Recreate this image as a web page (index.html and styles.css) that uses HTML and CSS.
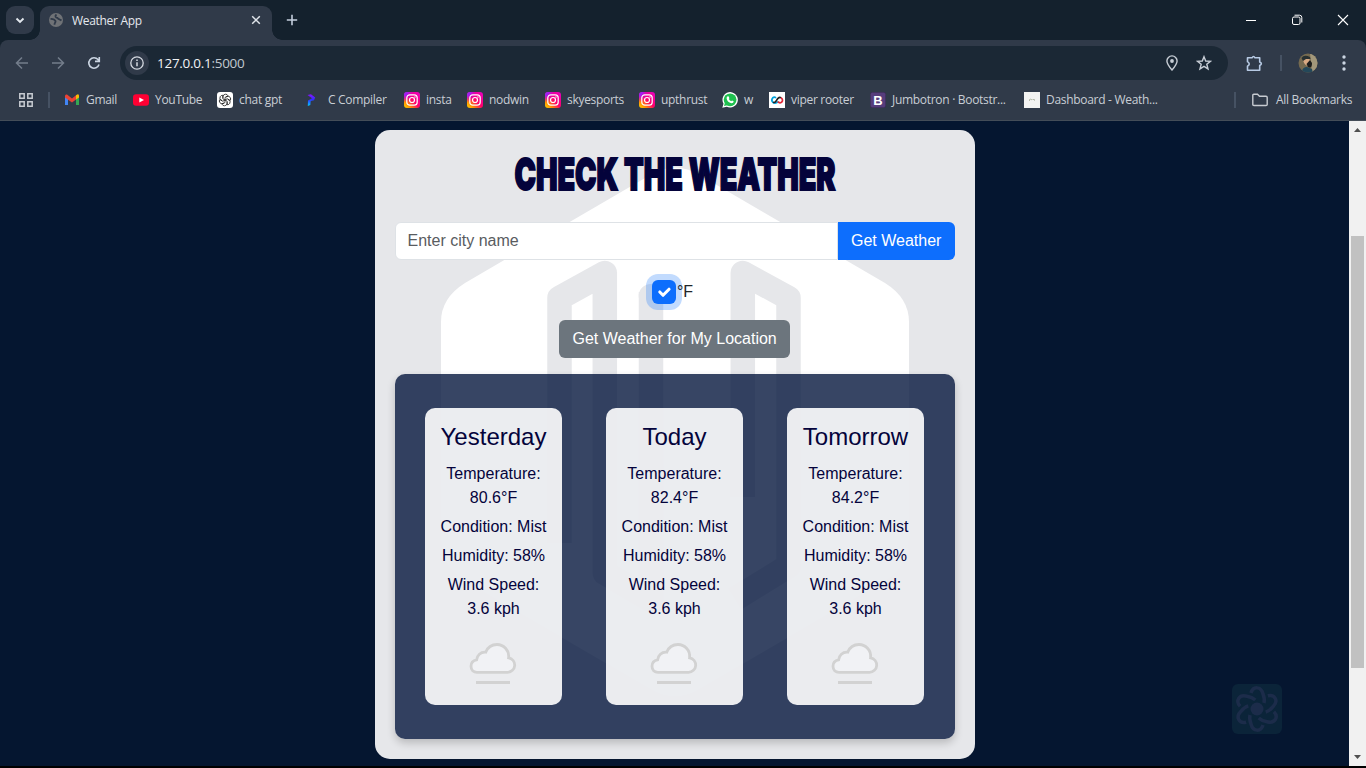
FILE: index.html
```html
<!DOCTYPE html>
<html lang="en">
<head>
<meta charset="utf-8">
<title>Weather App</title>
<link rel="stylesheet" href="styles.css">
</head>
<body>
<svg width="0" height="0" class="defs" aria-hidden="true">
  <defs>
    <linearGradient id="ig" x1="0" y1="1" x2="1" y2="0"><stop offset="0" stop-color="#ffd600"/><stop offset=".22" stop-color="#ff9100"/><stop offset=".5" stop-color="#ff0069"/><stop offset="1" stop-color="#e600c8"/></linearGradient>
    <radialGradient id="ig2" cx="0" cy="0" r=".65"><stop offset="0" stop-color="#7638fa"/><stop offset=".35" stop-color="#a818f0"/><stop offset="1" stop-color="#d300c5" stop-opacity="0"/></radialGradient>
    <linearGradient id="prog" x1="0" y1="1" x2="0" y2="0"><stop offset="0" stop-color="#00d0ff"/><stop offset=".55" stop-color="#3030ff"/><stop offset="1" stop-color="#8a10ff"/></linearGradient>
    <symbol id="insta" viewBox="0 0 16 16"><rect width="16" height="16" rx="3" fill="url(#ig)"/><rect width="16" height="16" rx="3" fill="url(#ig2)"/><rect x="2.8" y="2.8" width="10.4" height="10.4" rx="3" fill="none" stroke="#fff" stroke-width="1.2"/><circle cx="8" cy="8" r="2.5" fill="none" stroke="#fff" stroke-width="1.2"/><circle cx="11" cy="5" r=".7" fill="#fff"/></symbol>
    <symbol id="mist" viewBox="0 0 48 42"><path d="M8 30.3H38.500A7.300 7.300 0 0 0 39.600 15.800C40.500 8.500 35 2.600 28 2.500C22.500 2.500 18.600 5.600 16.700 10.200C11.500 9.800 8 13.500 7.600 17.900C3.500 18.600 2 21 2 24.300C2 28 4.500 30.300 8 30.300Z" fill="#f1f2f5" stroke="#d2d2d2" stroke-width="2.800"/><path d="M7 40.500H41" stroke="#d2d2d2" stroke-width="3"/></symbol>
  </defs>
</svg>
<div class="window">
  <header class="tabstrip">
    <div class="tab-search"><svg width="10" height="7" viewBox="0 0 10 7"><path d="M1.500 1.500 5 5 8.500 1.500" fill="none" stroke="#e3e8ee" stroke-width="1.900"/></svg></div>
    <div class="tab">
      <svg class="tab-icon" width="14" height="14" viewBox="0 0 14 14"><circle cx="7" cy="7" r="7" fill="#6f7276"/><path d="M1.500 5.800C3.500 6 5.500 6 6.500 8C7 9.500 5.500 9.500 5.500 11.800M7.500 1.500C5.500 3 6.500 5 8.500 5C9.500 6.500 11 6 12.500 7.500" fill="none" stroke="#303a49" stroke-width="1.800"/></svg>
      <span class="tab-title">Weather App</span>
      <svg width="10" height="10" viewBox="0 0 10 10"><path d="M1.200 1.200 8.800 8.800M8.800 1.200 1.200 8.800" stroke="#dfe4ea" stroke-width="1.500"/></svg>
    </div>
    <svg class="new-tab" width="12" height="12" viewBox="0 0 12 12"><path d="M6 .800V11.200M.800 6H11.200" stroke="#c3cedd" stroke-width="1.600"/></svg>
    <div class="controls">
      <svg width="12" height="12" viewBox="0 0 12 12"><path d="M1 6.500H11" stroke="#fff"/></svg>
      <svg width="12" height="12" viewBox="0 0 12 12" fill="none" stroke="#fff"><rect x="1.500" y="3" width="7.500" height="7.500" rx="1.500"/><path d="M3.500 1.200H8.500Q10.800 1.200 10.800 3.500V8.500"/></svg>
      <svg width="12" height="12" viewBox="0 0 12 12"><path d="M1 1 11 11M11 1 1 11" stroke="#fff" stroke-width="1.100"/></svg>
    </div>
  </header>
  <div class="toolbar-wrap"><div class="toolbar">
    <svg class="nav" width="14" height="14" viewBox="0 0 14 14"><path d="M13 7H2M7 1.500 1.500 7 7 12.500" fill="none" stroke="#737d8b" stroke-width="1.500"/></svg>
    <svg class="nav" width="14" height="14" viewBox="0 0 14 14"><path d="M1 7H12M7 1.500 12.500 7 7 12.500" fill="none" stroke="#737d8b" stroke-width="1.500"/></svg>
    <svg class="nav" width="14" height="14" viewBox="0 0 14 14"><path d="M12 8.500A5.200 5.200 0 1 1 11 3.600L12.200 5M12.300 1V5.400H8" fill="none" stroke="#cbd5e2" stroke-width="1.600"/></svg>
    <div class="omnibox">
      <span class="info"><svg width="14" height="14" viewBox="0 0 14 14"><circle cx="7" cy="7" r="6.200" fill="none" stroke="#d5dae1" stroke-width="1.300"/><path d="M7 6.200V10.300M7 3.500V5" stroke="#d5dae1" stroke-width="1.500"/></svg></span>
      <span class="url">127.0.0.1<i>:5000</i></span>
      <svg class="pin" width="12" height="16" viewBox="0 0 12 16"><path d="M6 15C3 11.500 .900 9 .900 6A5.100 5.100 0 0 1 11.100 6C11.100 9 9 11.500 6 15Z" fill="none" stroke="#c7cdd5" stroke-width="1.400"/><circle cx="6" cy="6" r="1.900" fill="#c7cdd5"/></svg>
      <svg class="star" width="16" height="16" viewBox="0 0 16 16"><path d="M8 1.700 9.700 6 14.400 6.300 10.800 9.300 12 13.900 8 11.400 4 13.900 5.200 9.300 1.600 6.300 6.300 6Z" fill="none" stroke="#c7cdd5" stroke-width="1.400"/></svg>
    </div>
    <svg class="ext" width="17" height="17" viewBox="0 0 17 17"><path d="M1.500 2.800H6Q7.500 .300 9 2.800H13.700V7Q17 8.500 13.700 10.500V15.200H1.500V11.200Q5 9 1.500 6.700Z" fill="none" stroke="#b7cae4" stroke-width="1.600" stroke-linejoin="round"/></svg>
    <span class="sep"></span>
    <svg class="avatar" width="20" height="20" viewBox="0 0 20 20"><clipPath id="av"><circle cx="10" cy="10" r="9.500"/></clipPath><g clip-path="url(#av)"><rect width="20" height="20" fill="#756a50"/><path d="M12 0H20V20H14Z" fill="#a2977a"/><ellipse cx="8.800" cy="8.500" rx="3.300" ry="5" fill="#d8a982" transform="rotate(-35 9 8)"/><path d="M3.500 5Q6 1 12 4L12.500 6 8 6 5 8Z" fill="#283031"/><path d="M8.500 11 12 7 14 10Q14 16 10 14Z" fill="#1d1d1c"/><path d="M3 20Q5 13 9 14L14 16 15 20Z" fill="#24485a"/></g></svg>
    <svg class="more" width="4" height="16" viewBox="0 0 4 16" fill="#cbd5e2"><circle cx="2" cy="2" r="1.700"/><circle cx="2" cy="8" r="1.700"/><circle cx="2" cy="14" r="1.700"/></svg>
  </div></div>
  <nav class="bookmarks">
    <svg width="14" height="14" viewBox="0 0 14 14" fill="none" stroke="#c7cbd1" stroke-width="1.500"><path d="M.800.800H5.200V5.200H.800ZM8.800.800H13.200V5.200H8.800ZM.800 8.800H5.200V13.200H.800ZM8.800 8.800H13.200V13.200H8.800Z"/></svg>
    <span class="sep"></span>
    <a><svg viewBox="0 0 16 16"><path d="M1 4V13H4V7Z" fill="#4285f4"/><path d="M12 7V13H15V4Z" fill="#34a853"/><path d="M1 4Q1 2 3 2.500L8 6.500 12 3.300V7.500L8 10.500 1 5.500Z" fill="#ea4335"/><path d="M12 3.300Q15 1 15 4V5.500L12 7.600Z" fill="#fbbc04"/></svg><span>Gmail</span></a>
    <a><svg viewBox="0 0 16 16"><rect y="2.200" width="16" height="11.600" rx="3" fill="#ff0033"/><path d="M6.300 5.500 11 8 6.300 10.500Z" fill="#fff"/></svg><span>YouTube</span></a>
    <a><svg viewBox="0 0 16 16"><rect width="16" height="16" rx="3" fill="#fff"/><g fill="none" stroke="#222" stroke-width=".8"><path d="M6 5.800V4.500Q6.300 2.300 8.500 2.200Q10.300 2.200 11 3.700L8 5.500V8"/><path d="M6 5.800V4.500Q6.300 2.300 8.500 2.200Q10.300 2.200 11 3.700L8 5.500V8" transform="rotate(60 8 8)"/><path d="M6 5.800V4.500Q6.300 2.300 8.500 2.200Q10.300 2.200 11 3.700L8 5.500V8" transform="rotate(120 8 8)"/><path d="M6 5.800V4.500Q6.300 2.300 8.500 2.200Q10.300 2.200 11 3.700L8 5.500V8" transform="rotate(180 8 8)"/><path d="M6 5.800V4.500Q6.300 2.300 8.500 2.200Q10.300 2.200 11 3.700L8 5.500V8" transform="rotate(240 8 8)"/><path d="M6 5.800V4.500Q6.300 2.300 8.500 2.200Q10.300 2.200 11 3.700L8 5.500V8" transform="rotate(300 8 8)"/></g></svg><span>chat gpt</span></a>
    <a class="cc"><svg viewBox="0 0 16 16"><path d="M4.500 3 8 2.300 12.200 5.500 11 8.300 7.700 9 7.300 13 4.800 14 5 8.600 9 6.300Z" fill="url(#prog)"/></svg><span>C Compiler</span></a>
    <a><svg><use href="#insta"/></svg><span>insta</span></a>
    <a><svg><use href="#insta"/></svg><span>nodwin</span></a>
    <a><svg><use href="#insta"/></svg><span>skyesports</span></a>
    <a><svg><use href="#insta"/></svg><span>upthrust</span></a>
    <a><svg viewBox="0 0 16 16"><path d="M.300 15.800 1.500 11.700A7.700 7.700 0 1 1 4.700 14.700Z" fill="#fff"/><circle cx="8.100" cy="7.800" r="6.400" fill="#1fbf4f"/><path d="M2 14 3 10.500 5.500 13.300Z" fill="#1fbf4f"/><path d="M5.700 4.300 6.800 4.500 7.400 6.200 6.800 7Q7.500 8.500 9.200 9.200L10 8.400 11.700 9.200Q11.600 11.200 9.500 11.200Q5 10 4.600 6.200Q4.600 5 5.700 4.300Z" fill="#fff"/></svg><span>w</span></a>
    <a><svg viewBox="0 0 16 16"><path d="M0 0H16V16H0Z" fill="#fff"/><path d="M9.200 9.800Q6.300 12 3.800 10.300Q1.800 8 3.800 5.700Q5.500 4.500 7 6" fill="none" stroke="#00a3dd" stroke-width="1.700"/><path d="M4 10.300Q6 11.200 7.500 8.500Q9.500 4.500 12 5.700" fill="none" stroke="#222" stroke-width="1.600"/><path d="M12 5.700Q14.800 8 12.500 10.300Q10.500 11.500 8.800 9.700" fill="none" stroke="#e32636" stroke-width="1.700"/></svg><span>viper rooter</span></a>
    <a><svg viewBox="0 0 16 16"><rect x=".300" y=".300" width="15.400" height="15.400" rx="2" fill="#563d7c" stroke="#392850" stroke-width=".600"/><text x="8" y="12.500" class="bs">B</text></svg><span>Jumbotron · Bootstr...</span></a>
    <a><svg viewBox="0 0 16 16"><path d="M0 0H16V16H0Z" fill="#f3f3f2"/><path d="M5.500 9V7.500Q7 6.500 8 8M8.500 7.500H10.500V8.700" fill="none" stroke="#b3b9a9"/></svg><span>Dashboard - Weath...</span></a>
    <span class="sep"></span>
    <a class="all"><svg viewBox="0 0 16 16"><path d="M.800 3.300Q.800 2.300 1.800 2.300H5.500L7.500 4.300H14Q15.200 4.300 15.200 5.500V12.500Q15.200 13.500 14 13.500H2Q.800 13.500 .800 12.500Z" fill="none" stroke="#c7cbd1" stroke-width="1.400"/></svg><span>All Bookmarks</span></a>
  </nav>
  <div class="viewport">
    <main>
      <section class="container">
        <svg class="backdrop" width="600" height="629" viewBox="375 130 600 629" aria-hidden="true">
          <path d="M652 174Q675 161 698 174L885 283Q909 298 909 322V538Q909 567 885 581L698 690Q675 703 652 690L465 581Q441 567 441 538V322Q441 298 465 283Z" fill="#fff"/>
          <g fill="none" stroke="#e6e7ea" stroke-width="24.500" stroke-linejoin="round"><path d="M559.500 543V298L604.800 273V573L651 600V292"/><circle cx="650.700" cy="296" r="5" stroke-width="14"/><path d="M742.800 497V273L788.500 298V566L735 599"/></g>
        </svg>
        <h1><svg width="560" height="60" viewBox="0 0 560 60"><text x="119.500" y="40" textLength="321" lengthAdjust="spacingAndGlyphs">CHECK THE WEATHER</text></svg></h1>
        <div class="search"><div class="field">Enter city name</div><div class="btn primary">Get Weather</div></div>
        <div class="unit"><span class="check"><svg width="24" height="24" viewBox="0 0 20 20"><path d="m6.500 10 2.700 2.700 5-5" fill="none" stroke="#fff" stroke-width="2.600" stroke-linecap="round" stroke-linejoin="round"/></svg></span><span>°F</span></div>
        <div class="btn secondary">Get Weather for My Location</div>
        <div class="forecast">
          <article><h2>Yesterday</h2><p>Temperature: 80.6°F</p><p>Condition: Mist</p><p>Humidity: 58%</p><p>Wind Speed:<br>3.6 kph</p><svg class="mist"><use href="#mist"/></svg></article>
          <article><h2>Today</h2><p>Temperature: 82.4°F</p><p>Condition: Mist</p><p>Humidity: 58%</p><p>Wind Speed:<br>3.6 kph</p><svg class="mist"><use href="#mist"/></svg></article>
          <article><h2>Tomorrow</h2><p>Temperature: 84.2°F</p><p>Condition: Mist</p><p>Humidity: 58%</p><p>Wind Speed:<br>3.6 kph</p><svg class="mist"><use href="#mist"/></svg></article>
        </div>
      </section>
      <div class="widget"><svg width="50" height="50" viewBox="-25 -25 50 50"><circle r="6.500" fill="#1c2c4a"/><g fill="none" stroke="#1c2c4a" stroke-width="3.500"><path d="M-6-16C-4-23 4-23 6-15Q8-10 7-6"/><path d="M-6-16C-4-23 4-23 6-15Q8-10 7-6" transform="rotate(60)"/><path d="M-6-16C-4-23 4-23 6-15Q8-10 7-6" transform="rotate(120)"/><path d="M-6-16C-4-23 4-23 6-15Q8-10 7-6" transform="rotate(180)"/><path d="M-6-16C-4-23 4-23 6-15Q8-10 7-6" transform="rotate(240)"/><path d="M-6-16C-4-23 4-23 6-15Q8-10 7-6" transform="rotate(300)"/></g></svg></div>
    </main>
    <aside class="scrollbar"><svg width="7" height="4" viewBox="0 0 7 4"><path d="M0 4 3.500 0 7 4Z" fill="#505050"/></svg><div class="thumb"></div><svg width="7" height="4" viewBox="0 0 7 4"><path d="M0 0 3.500 4 7 0Z" fill="#505050"/></svg></aside>
  </div>
</div>
</body>
</html>
```
FILE: styles.css
```css
* { box-sizing: border-box; }
body { margin: 0; background: #000; font-family: "Liberation Sans", Arial, sans-serif; overflow: hidden; }
svg { display: block; flex: none; }
.defs { position: absolute; }
.window { width: 1366px; height: 768px; display: flex; flex-direction: column; background: #000; font-family: "Open Sans", sans-serif; }

.tabstrip { height: 40px; flex: none; display: flex; padding: 6px 0 0 6px; background: #14212d; }
.tab-search { width: 28px; height: 28px; border-radius: 9px; background: #303a49; display: grid; place-items: center; }
.tab { position: relative; width: 232px; height: 34px; margin-left: 6px; padding: 0 11px 6px 9px; border-radius: 9px 9px 0 0; background: #303a49; display: flex; align-items: center; }
.tab::before, .tab::after { content: ""; position: absolute; bottom: 0; width: 10px; height: 10px; }
.tab::before { left: -10px; background: radial-gradient(circle at 0 0, transparent 9.500px, #303a49 10px); }
.tab::after { right: -10px; background: radial-gradient(circle at 100% 0, transparent 9.500px, #303a49 10px); }
.tab-title { flex: 1; margin-left: 9px; color: #e5e8ed; font-size: 12px; letter-spacing: -.3px; }
.new-tab { margin: 8px 0 0 14px; }
.controls { margin: 8px 17px 0 auto; display: flex; gap: 34px; }

.toolbar-wrap { flex: none; background: #14212d; }
.toolbar { height: 46px; display: flex; align-items: center; padding: 0 20px 0 15px; background: #303a49; border-radius: 8px 8px 0 0; }
.nav { margin-right: 22px; }
.omnibox { width: 1108px; height: 34px; margin-left: -3px; padding: 0 16px 0 5px; border-radius: 17px; background: #1b2835; display: flex; align-items: center; }
.info { width: 24px; height: 24px; border-radius: 50%; background: #303a49; display: grid; place-items: center; }
.url { margin-left: 8px; flex: 1; color: #f1f3f5; font-size: 13.500px; letter-spacing: -.28px; }
.url i { font-style: normal; color: #c1c8d0; }
.star { margin-left: 18px; }
.ext { margin-left: 18px; }
.sep { width: 2px; height: 16px; background: #465263; }
.toolbar .sep { margin-left: 17px; }
.avatar { margin-left: 16px; }
.more { margin-left: auto; }

.bookmarks { height: 35px; flex: none; padding: 0 0 6px 19px; background: #303a49; border-bottom: 1px solid #444d58; display: grid; grid-template-columns: 29px 16px 69px 84px 86px 101px 63px 78px 94px 83px 47px 101px 154px 210px 18px 115px; align-items: center; color: #c9ced5; font-size: 12px; }
.bookmarks a { display: flex; align-items: center; gap: 6px; white-space: nowrap; letter-spacing: -.3px; }
.bookmarks a svg { width: 16px; height: 16px; }
.bookmarks a span { margin-top: -1px; }
.bookmarks .cc { gap: 9px; }
.bookmarks .all { gap: 8px; }
.bs { fill: #fff; font: bold 13px "Liberation Sans", sans-serif; text-anchor: middle; letter-spacing: 0; }

.viewport { height: 645px; flex: none; display: flex; font-family: "Liberation Sans", Arial, sans-serif; }
main { position: relative; width: 1349px; background: #051630; padding: 9px 0 0 375px; }
.container { position: relative; isolation: isolate; width: 600px; height: 629px; padding: 20px; border-radius: 15px; background: #e6e7ea; overflow: hidden; display: flex; flex-direction: column; align-items: center; color: #212529; }
.backdrop { position: absolute; inset: 0; z-index: -1; filter: blur(.6px); }
h1 { margin: 0; height: 72px; width: 560px; }
h1 text { font: 900 44px Inter, sans-serif; fill: #04033b; stroke: #04033b; stroke-width: 1.900px; }
.search { width: 560px; height: 38px; flex: none; display: flex; font-size: 16px; line-height: 24px; }
.field { flex: 1; background: #fff; border: 1px solid #dee2e6; border-radius: 6px 0 0 6px; padding: 6px 11.500px; color: #595c5f; }
.btn { height: 38px; flex: none; padding: 7px 13px; color: #fff; font-size: 16px; line-height: 24px; border-radius: 6px; white-space: nowrap; }
.primary { width: 117px; background: #0d6efd; border-radius: 0 6px 6px 0; }
.secondary { width: 231px; margin-top: 16px; margin-right: 1px; padding-left: 13.500px; background: #6c757d; }
.unit { height: 24px; flex: none; display: flex; margin-top: 20px; margin-left: -6px; line-height: 24px; font-size: 16px; }
.check { width: 24px; height: 24px; margin: 0 1px 0 1px; border-radius: 6px; background: #0d6efd; box-shadow: 0 0 0 6px rgba(13,110,253,.25); }
.forecast { width: 560px; height: 365px; margin-top: 16px; flex: none; padding: 34px 31px 34px 30px; border-radius: 10px; background: rgba(5,22,61,.8); box-shadow: 0 4px 8px rgba(0,0,0,.2); display: flex; justify-content: space-between; }
article { width: 137px; height: 297px; padding: 14px 10px; border-radius: 10px; background: rgba(255,255,255,.9); color: #04033b; text-align: center; display: flex; flex-direction: column; align-items: center; }
h2 { margin: 0 -5px 10px; font-weight: 400; font-size: 24px; line-height: 29px; }
p { margin: 0 -3px 5px; font-size: 16px; line-height: 24px; }
p:first-of-type { width: 110px; margin-top: 1px; }
.mist { width: 48px; height: 42px; margin: 16px 1px 0 0; }
.widget { position: absolute; left: 1232px; top: 563px; width: 50px; height: 50px; border-radius: 6px; background: #0b2439; }
.scrollbar { width: 17px; background: #f1f1f1; display: flex; flex-direction: column; align-items: center; padding: 7px 0; }
.thumb { width: 13px; height: 432px; margin: 104px 0 auto; background: #c1c1c1; }
```
